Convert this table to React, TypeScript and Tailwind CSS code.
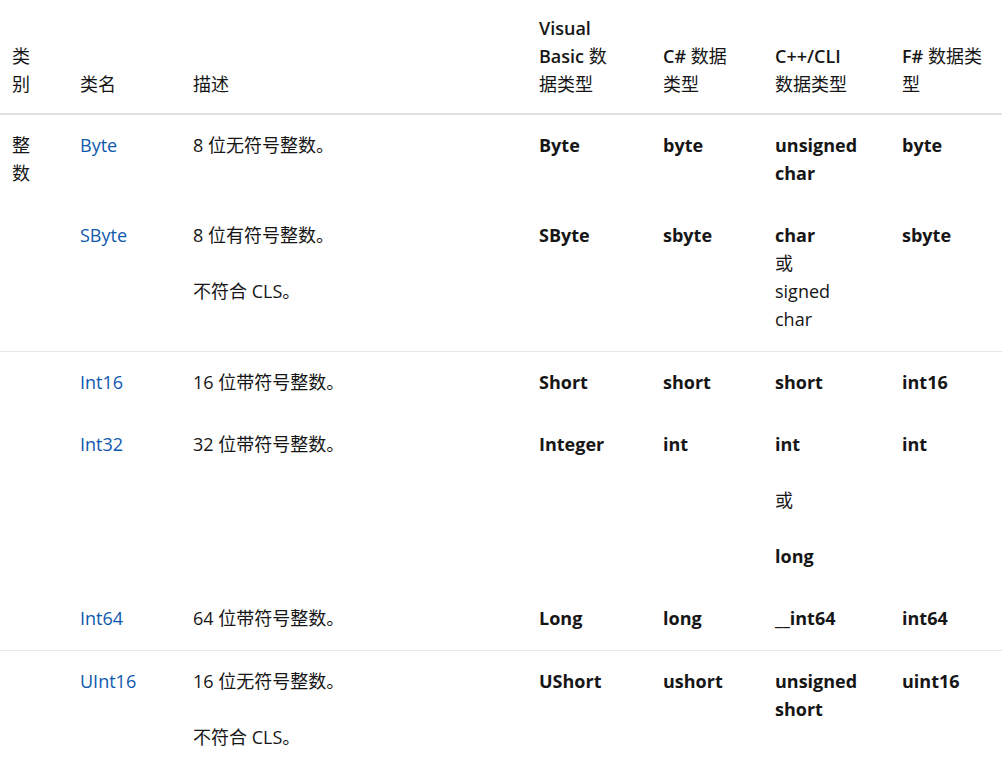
import React from "react";

const F = { fontFamily: '"Open Sans", "Noto Sans CJK SC", sans-serif' };

const td = "align-top pl-3 pr-0 pt-[16px] pb-[18px] whitespace-nowrap";
const th = "align-bottom pl-3 pr-0 pt-[14px] pb-[15px] font-normal text-left whitespace-nowrap";
const link = "text-[#0e59ad]";

function L({ children, b }: { children: React.ReactNode; b?: boolean }) {
  return <div className={b ? "font-bold" : ""}>{children}</div>;
}

export default function App() {
  return (
    <div className="w-[1002px] h-[758px] overflow-hidden bg-white text-[#161616] text-[18px] leading-[28px]" style={F}>
      <table className="table-fixed border-collapse w-[1002px]">
        <colgroup>
          <col className="w-[68px]" />
          <col className="w-[113px]" />
          <col className="w-[346px]" />
          <col className="w-[124px]" />
          <col className="w-[112px]" />
          <col className="w-[127px]" />
          <col className="w-[112px]" />
        </colgroup>
        <thead>
          <tr className="border-b-2 border-[#e0e0e0]">
            <th className={th}>
              <div>类</div>
              <div>别</div>
            </th>
            <th className={th}>类名</th>
            <th className={th}>描述</th>
            <th className={th}>
              <div className="font-semibold">Visual</div>
              <div><span className="font-semibold">Basic</span> 数</div>
              <div>据类型</div>
            </th>
            <th className={th}>
              <div><span className="font-semibold">C#</span> 数据</div>
              <div>类型</div>
            </th>
            <th className={th}>
              <div className="font-semibold">C++/CLI</div>
              <div>数据类型</div>
            </th>
            <th className={th}>
              <div><span className="font-semibold">F#</span> 数据类</div>
              <div>型</div>
            </th>
          </tr>
        </thead>
        <tbody>
          <tr>
            <td className={td}>
              <div>整</div>
              <div>数</div>
            </td>
            <td className={td}><span className={link}>Byte</span></td>
            <td className={td}>8 位无符号整数。</td>
            <td className={td}><L b>Byte</L></td>
            <td className={td}><L b>byte</L></td>
            <td className={td}>
              <L b>unsigned</L>
              <L b>char</L>
            </td>
            <td className={td}><L b>byte</L></td>
          </tr>
          <tr className="border-b border-[#e6e6e6]">
            <td className={td}></td>
            <td className={td}><span className={link}>SByte</span></td>
            <td className={td}>
              <p>8 位有符号整数。</p>
              <p className="mt-7">不符合 CLS。</p>
            </td>
            <td className={td}><L b>SByte</L></td>
            <td className={td}><L b>sbyte</L></td>
            <td className={td}>
              <L b>char</L>
              <L>或</L>
              <L>signed</L>
              <L>char</L>
            </td>
            <td className={td}><L b>sbyte</L></td>
          </tr>
          <tr>
            <td className={td}></td>
            <td className={td}><span className={link}>Int16</span></td>
            <td className={td}>16 位带符号整数。</td>
            <td className={td}><L b>Short</L></td>
            <td className={td}><L b>short</L></td>
            <td className={td}><L b>short</L></td>
            <td className={td}><L b>int16</L></td>
          </tr>
          <tr>
            <td className={td}></td>
            <td className={td}><span className={link}>Int32</span></td>
            <td className={td}>32 位带符号整数。</td>
            <td className={td}><L b>Integer</L></td>
            <td className={td}><L b>int</L></td>
            <td className={td}>
              <p className="font-bold">int</p>
              <p className="mt-7">或</p>
              <p className="mt-7 font-bold">long</p>
            </td>
            <td className={td}><L b>int</L></td>
          </tr>
          <tr className="border-b border-[#e6e6e6]">
            <td className={td}></td>
            <td className={td}><span className={link}>Int64</span></td>
            <td className={td}>64 位带符号整数。</td>
            <td className={td}><L b>Long</L></td>
            <td className={td}><L b>long</L></td>
            <td className={td}><L b>__int64</L></td>
            <td className={td}><L b>int64</L></td>
          </tr>
          <tr>
            <td className={td}></td>
            <td className={td}><span className={link}>UInt16</span></td>
            <td className={td}>
              <p>16 位无符号整数。</p>
              <p className="mt-7">不符合 CLS。</p>
            </td>
            <td className={td}><L b>UShort</L></td>
            <td className={td}><L b>ushort</L></td>
            <td className={td}>
              <L b>unsigned</L>
              <L b>short</L>
            </td>
            <td className={td}><L b>uint16</L></td>
          </tr>
        </tbody>
      </table>
    </div>
  );
}
